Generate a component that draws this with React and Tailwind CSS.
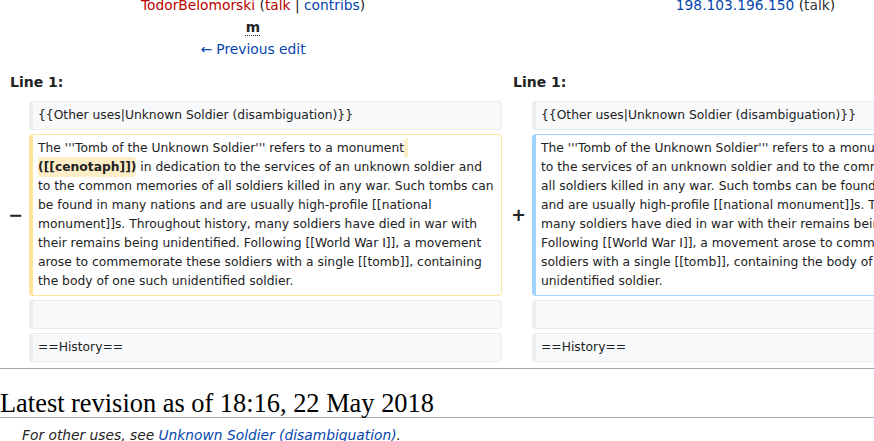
const sans = { fontFamily: '"DejaVu Sans", sans-serif' };

const cellBase =
  'rounded-[4px] border border-l-4 pl-[5px] py-[4px] text-[12.32px] leading-[19px] text-[#222] whitespace-pre-wrap break-words';

function Context({ children }) {
  return (
    <div className={`${cellBase} pr-[6px] bg-[#f8f9fa] border-[#eaecf0]`}>
      {children}
    </div>
  );
}

function Marker({ children }) {
  return (
    <div className="self-center text-right pr-[2px] text-[17.5px] font-bold leading-[21px] text-[#222]">
      {children}
    </div>
  );
}

export default function App() {
  return (
    <div className="h-[441px] w-full overflow-hidden bg-white text-[#222]" style={sans}>
      <div className="w-[1009px] px-[4px] -mt-[6px] grid grid-cols-[21px_473px_22px_473px] gap-x-[4px] gap-y-[4px]">
        {/* Revision headers */}
        <div className="col-span-2 text-center text-[13.8px] leading-[22px]">
          <div>
            <span className="text-[#ba0000]">TodorBelomorski</span> (
            <span className="text-[#ba0000]">talk</span> |{' '}
            <span className="text-[#0645ad]">contribs</span>)
          </div>
          <div>
            <abbr className="font-bold no-underline" title="This is a minor edit">
              <span className="underline decoration-dotted decoration-1 underline-offset-[3px]">m</span>
            </abbr>
          </div>
          <div className="text-[#0645ad]">← Previous edit</div>
        </div>
        <div className="col-span-2 text-center text-[13.8px] leading-[22px]">
          <div>
            <span className="text-[#0645ad]">198.103.196.150</span> (
            <span className="text-[#333]">talk</span>)
          </div>
        </div>

        {/* Line numbers */}
        <div className="col-span-2 pl-[6px] pt-[7px] pb-[4px] text-[14px] leading-[22px] font-bold">
          Line 1:
        </div>
        <div className="col-span-2 pl-[7px] pt-[7px] pb-[4px] text-[14px] leading-[22px] font-bold">
          Line 1:
        </div>

        {/* Context */}
        <div />
        <Context>{'{{Other uses|Unknown Soldier (disambiguation)}}'}</Context>
        <div />
        <Context>{'{{Other uses|Unknown Soldier (disambiguation)}}'}</Context>

        {/* Changed paragraph */}
        <Marker>−</Marker>
        <div className={`${cellBase} pr-[6px] bg-white border-[#ffe49c]`}>
          {"The '''Tomb of the Unknown Soldier''' refers to a monument"}
          <span className="bg-[#feeec8] font-bold rounded-[4px] py-[3px]">{' ([[cenotaph]])'}</span>
          {' in dedication to the services of an unknown soldier and to the common memories of all soldiers killed in any war. Such tombs can be found in many nations and are usually high-profile [[national monument]]s. Throughout history, many soldiers have died in war with their remains being unidentified. Following [[World War I]], a movement arose to commemorate these soldiers with a single [[tomb]], containing the body of one such unidentified soldier.'}
        </div>
        <Marker>+</Marker>
        <div className={`${cellBase} pr-[9px] bg-white border-[#a3d3ff]`}>
          {"The '''Tomb of the Unknown Soldier''' refers to a monument in dedication to the services of an unknown soldier and to the common memories of all soldiers killed in any war. Such tombs can be found in many nations and are usually high-profile [[national monument]]s. Throughout history, many soldiers have died in war with their remains being unidentified. Following [[World War I]], a movement arose to commemorate these soldiers with a single [[tomb]], containing the body of one such unidentified soldier."}
        </div>

        {/* Empty line */}
        <div />
        <Context>
          <div className="h-[19px]" />
        </Context>
        <div />
        <Context>
          <div className="h-[19px]" />
        </Context>

        {/* Heading line */}
        <div />
        <Context>==History==</Context>
        <div />
        <Context>==History==</Context>
      </div>

      <hr className="mt-[6px] h-px border-0 bg-[#a2a9b1]" />

      <h2
        className="mt-[20px] text-[26.4px] leading-[28px] font-normal text-black border-b border-[#a2a9b1]"
        style={{ fontFamily: '"Liberation Serif", serif' }}
      >
        Latest revision as of 18:16, 22 May 2018
      </h2>

      <div className="mt-[6px] pl-[22px] text-[13.8px] leading-[22px] italic text-[#222]">
        For other uses, see <span className="text-[#0645ad]">Unknown Soldier (disambiguation)</span>.
      </div>
    </div>
  );
}
